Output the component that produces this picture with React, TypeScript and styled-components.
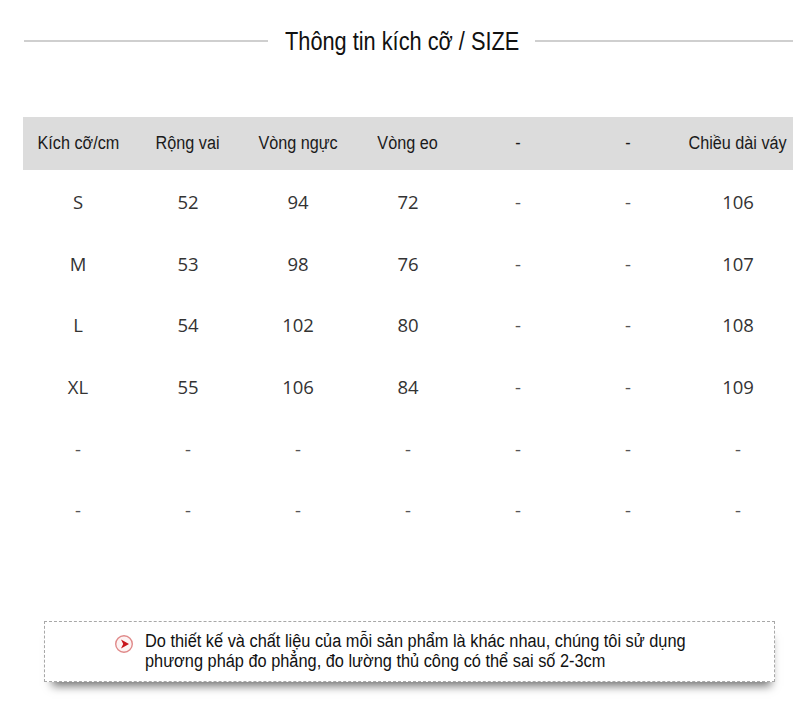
import React from "react";
import styled, { createGlobalStyle } from "styled-components";

const Global = createGlobalStyle`
  html, body { margin: 0; padding: 0; background: #ffffff; }
  body { width: 800px; height: 717px; overflow: hidden; font-family: "Liberation Sans", Arial, sans-serif; }
`;

const Page = styled.div`
  width: 800px;
  height: 717px;
  display: flex;
  flex-direction: column;
  background: #fff;
`;

const TitleRow = styled.div`
  height: 82px;
  display: flex;
  align-items: center;
  padding: 0 7px 0 24px;
  gap: 17px;
`;

const Line = styled.div<{ $w?: number }>`
  flex: ${(p) => (p.$w ? `0 0 ${p.$w}px` : "1")};
  height: 2px;
  background: #cfcfcf;
`;

const Title = styled.h1`
  margin: 0;
  width: 233px;
  font-weight: 400;
  font-size: 25px;
  color: #111;
  white-space: nowrap;
`;

const Narrow = styled.span<{ $k: number; $center?: boolean }>`
  display: inline-block;
  transform: scaleX(${(p) => p.$k});
  transform-origin: ${(p) => (p.$center ? "center" : "left")} center;
  white-space: nowrap;
`;

const Table = styled.div`
  margin: 35px 0 0 23px;
  width: 770px;
  display: grid;
  grid-template-columns: repeat(7, 110px);
`;

const HeadCell = styled.div`
  height: 53px;
  background: #dcdcdc;
  display: flex;
  align-items: center;
  justify-content: center;
  font-size: 18px;
  color: #1a1a1a;
  white-space: nowrap;
`;

const Cell = styled.div<{ $dash?: boolean }>`
  box-sizing: border-box;
  height: 61.6px;
  padding-top: 2px;
  display: flex;
  align-items: center;
  justify-content: center;
  font-family: "Open Sans", "Liberation Sans", sans-serif;
  font-size: 18.5px;
  color: ${(p) => (p.$dash ? "#555" : "#333")};
`;

const Note = styled.div`
  margin: 81px 0 0 44px;
  width: 731px;
  height: 61px;
  box-sizing: border-box;
  border: 1px dashed #a8a8a8;
  background: #fff;
  display: flex;
  align-items: center;
  gap: 11px;
  padding-left: 69px;
  box-shadow: 2px 10px 9px -6px rgba(0, 0, 0, 0.55);
`;

const NoteText = styled.p`
  margin: 0;
  font-size: 18px;
  line-height: 20px;
  color: #111;
`;

const Icon = () => (
  <svg width="20" height="20" viewBox="0 0 20 20" style={{ flexShrink: 0, marginTop: -14 }}>
    <circle cx="10" cy="10" r="8.3" fill="#fdf3f3" stroke="#e08a8a" strokeWidth="1.4" />
    <path d="M7 5.5 L15 10 L7 14.5 L9.2 10 Z" fill="#c8141b" />
  </svg>
);

const headers = ["Kích cỡ/cm", "Rộng vai", "Vòng ngực", "Vòng eo", "-", "-", "Chiều dài váy"];
const rows = [
  ["S", "52", "94", "72", "-", "-", "106"],
  ["M", "53", "98", "76", "-", "-", "107"],
  ["L", "54", "102", "80", "-", "-", "108"],
  ["XL", "55", "106", "84", "-", "-", "109"],
  ["-", "-", "-", "-", "-", "-", "-"],
  ["-", "-", "-", "-", "-", "-", "-"],
];

export default function App() {
  return (
    <Page>
      <Global />
      <TitleRow>
        <Line $w={244} />
        <Title>
          <Narrow $k={0.87}>Thông tin kích cỡ / SIZE</Narrow>
        </Title>
        <Line />
      </TitleRow>
      <Table>
        {headers.map((h, i) => (
          <HeadCell key={"h" + i}>
            <Narrow $k={0.9} $center>
              {h}
            </Narrow>
          </HeadCell>
        ))}
        {rows.map((r, ri) =>
          r.map((c, ci) => (
            <Cell key={ri + "-" + ci} $dash={c === "-"}>
              {c}
            </Cell>
          ))
        )}
      </Table>
      <Note>
        <Icon />
        <NoteText>
          <Narrow $k={0.908}>Do thiết kế và chất liệu của mỗi sản phẩm là khác nhau, chúng tôi sử dụng</Narrow>
          <br />
          <Narrow $k={0.908}>phương pháp đo phẳng, đo lường thủ công có thể sai số 2-3cm</Narrow>
        </NoteText>
      </Note>
    </Page>
  );
}
